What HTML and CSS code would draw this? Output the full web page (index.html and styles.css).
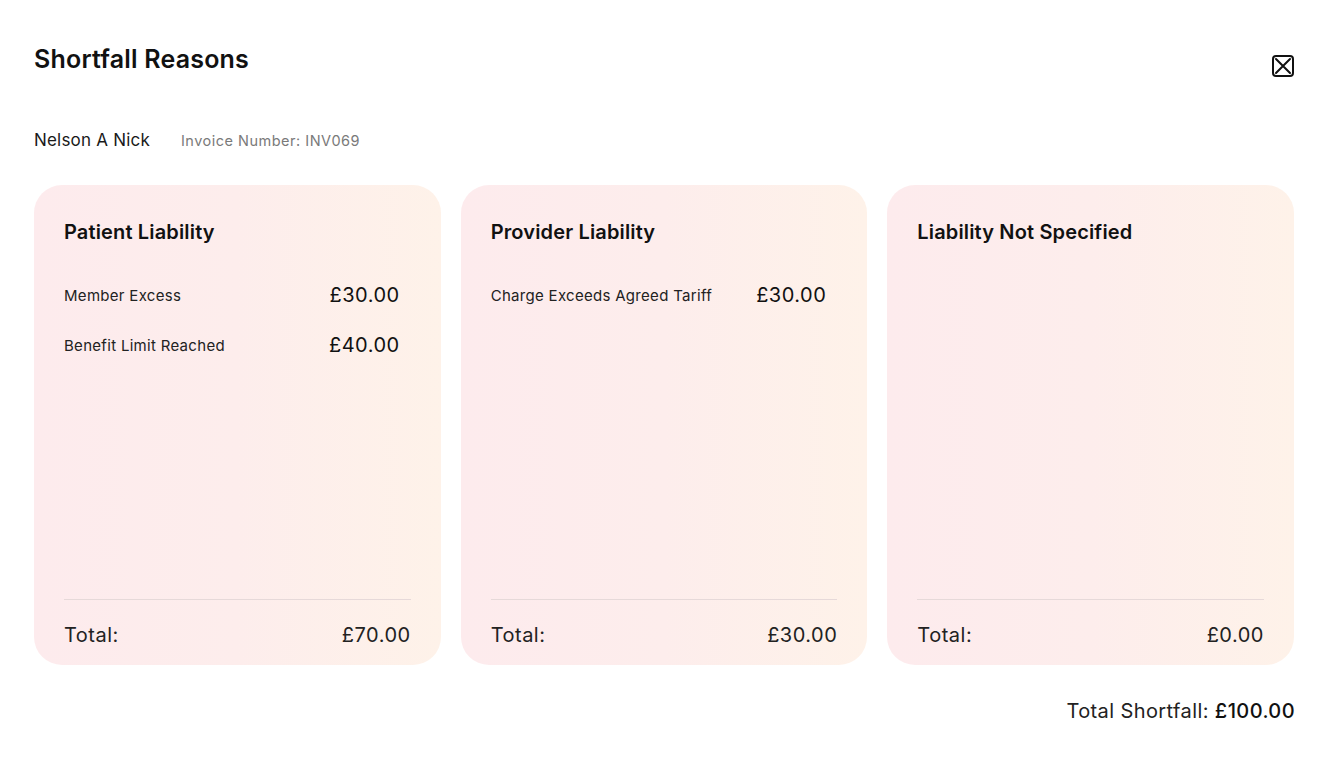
FILE: index.html
```html
<!DOCTYPE html>
<html lang="en">
<head>
<meta charset="utf-8">
<title>Shortfall Reasons</title>
<link rel="stylesheet" href="styles.css">
</head>
<body>
<div class="modal">
  <header class="modal-head">
    <h1 class="modal-title">Shortfall Reasons</h1>
    <button class="close-btn" aria-label="Close">
      <svg width="24" height="24" viewBox="0 0 24 24" fill="none" stroke="#111" stroke-width="2" stroke-linecap="round" stroke-linejoin="round">
        <rect x="2" y="2" width="20" height="20" rx="3"/>
        <path d="M5 5 L19 19 M19 5 L5 19"/>
      </svg>
    </button>
  </header>
  <div class="meta">
    <span class="patient">Nelson A Nick</span>
    <span class="invoice">Invoice Number: INV069</span>
  </div>
  <div class="cards">
    <section class="card">
      <h2 class="card-title">Patient Liability</h2>
      <div class="items">
        <div class="item"><span class="item-label">Member Excess</span><span class="item-amt">£30.00</span></div>
        <div class="item"><span class="item-label">Benefit Limit Reached</span><span class="item-amt">£40.00</span></div>
      </div>
      <div class="total"><span>Total:</span><span>£70.00</span></div>
    </section>
    <section class="card">
      <h2 class="card-title">Provider Liability</h2>
      <div class="items">
        <div class="item"><span class="item-label">Charge Exceeds Agreed Tariff</span><span class="item-amt">£30.00</span></div>
      </div>
      <div class="total"><span>Total:</span><span>£30.00</span></div>
    </section>
    <section class="card">
      <h2 class="card-title">Liability Not Specified</h2>
      <div class="items"></div>
      <div class="total"><span>Total:</span><span>£0.00</span></div>
    </section>
  </div>
  <div class="grand">Total Shortfall: <strong>£100.00</strong></div>
</div>
</body>
</html>
```
FILE: styles.css
```css
* { box-sizing: border-box; }
html, body { margin: 0; padding: 0; background: #fff; }
body {
  font-family: "Inter", "Noto Sans", sans-serif;
  color: #1a1a1a;
}
.modal {
  padding: 40px 35px 0 34px;
}
.modal-head {
  display: flex;
  justify-content: space-between;
  align-items: flex-start;
}
.modal-title {
  margin: 0;
  font-family: "Inter", sans-serif;
  font-weight: 600;
  font-size: 25px;
  line-height: 38px;
  letter-spacing: 0.2px;
  color: #111;
}
.close-btn {
  margin-top: 14px;
  padding: 0;
  border: 0;
  background: none;
  width: 24px;
  height: 24px;
  display: flex;
}
.meta {
  margin-top: 52px;
  display: flex;
  align-items: baseline;
  gap: 31px;
}
.patient {
  font-size: 17px;
  letter-spacing: 0.2px;
  color: #1a1a1a;
}
.invoice {
  font-size: 14.5px;
  letter-spacing: 0.5px;
  color: #7a7a7a;
}
.cards {
  margin-top: 35px;
  margin-right: 1px;
  display: grid;
  grid-template-columns: repeat(3, 1fr);
  gap: 20px;
}
.card {
  height: 480px;
  border-radius: 28px;
  background: linear-gradient(90deg, #fdebed 0%, #fdedec 50%, #fef2e9 100%);
  padding: 30px 30px 0 30px;
  display: flex;
  flex-direction: column;
}
.card-title {
  margin: 0;
  font-weight: 600;
  font-size: 20px;
  line-height: 34px;
  letter-spacing: 0.15px;
  color: #111;
}
.items {
  margin-top: 31px;
  padding-right: 11px;
  flex: 1;
  display: flex;
  flex-direction: column;
  gap: 20px;
}
.item {
  display: flex;
  justify-content: space-between;
  align-items: center;
  height: 30px;
}
.item-label {
  font-size: 15px;
  letter-spacing: 0.3px;
  color: #222;
}
.item-amt {
  font-size: 20px;
  letter-spacing: 0.5px;
  color: #111;
}
.total {
  border-top: 1px solid #e6d9d9;
  height: 66px;
  display: flex;
  justify-content: space-between;
  align-items: center;
  padding-top: 4px;
  font-size: 20px;
  letter-spacing: 0.5px;
  color: #222;
}
.grand {
  margin-top: 34px;
  text-align: right;
  font-size: 20px;
  letter-spacing: 0.4px;
  color: #222;
}
.grand strong {
  font-weight: 500;
  color: #111;
}
```
